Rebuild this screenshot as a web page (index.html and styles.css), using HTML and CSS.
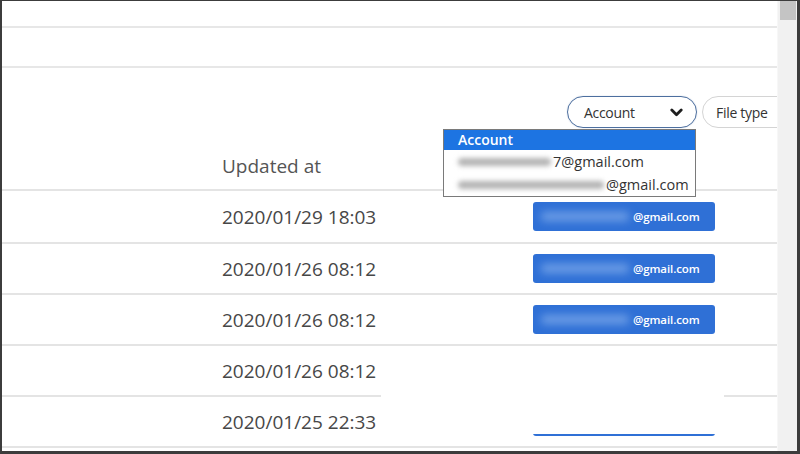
FILE: index.html
```html
<!DOCTYPE html>
<html>
<head>
<meta charset="utf-8">
<link rel="stylesheet" href="styles.css">
</head>
<body>
<div class="frame">
  <div class="main">
    <div class="band band-top"></div>
    <div class="band band-second"></div>
    <div class="toolbar">
      <div class="filters">
        <div class="pill pill-active">
          <span class="pill-label">Account</span>
          <svg class="chev" width="13" height="9" viewBox="0 0 13 9"><path d="M1.8 2 L6.5 6.7 L11.2 2" fill="none" stroke="#1e1e1e" stroke-width="2.8" stroke-linecap="round" stroke-linejoin="round"/></svg>
        </div>
        <div class="pill pill-plain"><span class="pill-label">File type</span></div>
      </div>
      <div class="header-row">
        <span class="header-cell">Updated at</span>
      </div>
    </div>
    <div class="row row-first">
      <span class="spacer"></span>
      <span class="date">2020/01/29 18:03</span>
      <span class="gap-cell"></span>
      <span class="chip"><span class="blur-blue"></span><span class="chip-mail">@gmail.com</span></span>
    </div>
    <div class="row">
      <span class="spacer"></span>
      <span class="date">2020/01/26 08:12</span>
      <span class="gap-cell"></span>
      <span class="chip"><span class="blur-blue"></span><span class="chip-mail">@gmail.com</span></span>
    </div>
    <div class="row">
      <span class="spacer"></span>
      <span class="date">2020/01/26 08:12</span>
      <span class="gap-cell"></span>
      <span class="chip"><span class="blur-blue"></span><span class="chip-mail">@gmail.com</span></span>
    </div>
    <div class="row">
      <span class="spacer"></span>
      <span class="date">2020/01/26 08:12</span>
      <span class="gap-cell"></span>
      <span class="chip-empty"></span>
    </div>
    <div class="row">
      <span class="spacer"></span>
      <span class="date">2020/01/25 22:33</span>
      <span class="gap-cell"></span>
      <span class="chip"><span class="blur-blue"></span><span class="chip-mail">@gmail.com</span></span>
    </div>
  </div>
  <div class="scrollbar"><div class="thumb"></div></div>

  <div class="redact"></div>

  <ul class="listbox">
    <li class="opt opt-selected">Account</li>
    <li class="opt"><span class="blur-grey blur-short"></span>7@gmail.com</li>
    <li class="opt"><span class="blur-grey blur-long"></span>@gmail.com</li>
  </ul>
</div>
</body>
</html>
```

FILE: styles.css
```css
html, body {
  margin: 0;
  padding: 0;
  background: #ffffff;
}
body {
  width: 800px;
  height: 454px;
  overflow: hidden;
  font-family: "Open Sans", "Noto Sans", sans-serif;
}
.frame {
  position: relative;
  box-sizing: border-box;
  width: 800px;
  height: 454px;
  border-style: solid;
  border-color: #3c3c3c;
  border-width: 1px 3px 3px 2px;
  display: flex;
  background: #fff;
}
.main {
  width: 775px;
  overflow: hidden;
  display: flex;
  flex-direction: column;
}
.band {
  border-bottom: 2px solid #e7e7e7;
}
.band-top { height: 25px; }
.band-second { height: 38px; }
.toolbar {
  height: 121px;
  border-bottom: 2px solid #e4e4e4;
  display: flex;
  flex-direction: column;
}
.filters {
  display: flex;
  gap: 5px;
  padding-top: 28px;
  padding-left: 565px;
  white-space: nowrap;
}
.pill {
  box-sizing: border-box;
  height: 32px;
  border-radius: 16px;
  display: flex;
  align-items: center;
  flex: none;
  font-size: 14px;
  color: #333;
}
.pill-active {
  width: 130px;
  border: 1.5px solid #4d6f9f;
  padding: 0 13px 0 16px;
  justify-content: space-between;
  box-shadow: 0 0 1px rgba(77,111,159,0.5);
}
.pill-plain {
  width: 100px;
  border: 1px solid #d4d4d4;
  padding-left: 13px;
}
.pill-label {
  letter-spacing: -0.3px;
}
.chev { display: block; }
.header-row {
  flex: 1;
  display: flex;
  align-items: flex-end;
  padding-left: 220px;
  padding-bottom: 10px;
}
.header-cell {
  font-size: 19px;
  line-height: 26px;
  color: #555;
}
.row {
  height: 49px;
  border-bottom: 2px solid #e4e4e4;
  display: grid;
  grid-template-columns: 220px 160px 151px 182px;
  align-items: center;
  flex: none;
}
.row-first { height: 51px; }
.date {
  font-size: 19px;
  color: #474747;
  white-space: nowrap;
}
.chip {
  height: 29px;
  border-radius: 3px;
  background: #2f70d6;
  display: flex;
  align-items: center;
  overflow: hidden;
  position: relative;
}
.chip-empty { height: 29px; }
.blur-blue {
  width: 88px;
  height: 9px;
  margin-left: 8px;
  margin-right: 4px;
  border-radius: 4px;
  background: #6f9fe6;
  filter: blur(4px);
  flex: none;
}
.chip-mail {
  font-size: 11.5px;
  font-weight: 600;
  color: #fff;
  letter-spacing: -0.1px;
}
.scrollbar {
  width: 20px;
  background: #f1f1f1;
  border-left: 1px solid #f7f7f7;
  padding-left: 2px;
  box-sizing: border-box;
}
.thumb {
  width: 16px;
  height: 19px;
  background: #c4c4c4;
}
.redact {
  position: absolute;
  left: 379px;
  top: 392px;
  width: 343px;
  height: 41px;
  background: #fff;
}
.listbox {
  position: absolute;
  left: 441px;
  top: 128px;
  width: 253px;
  box-sizing: border-box;
  margin: 0;
  padding: 0;
  list-style: none;
  border: 1px solid #7a7a7a;
  background: #fff;
  font-size: 14.5px;
  color: #333;
}
.opt {
  height: 23px;
  line-height: 23px;
  padding-left: 14px;
  white-space: nowrap;
  overflow: hidden;
  display: flex;
  align-items: center;
}
.opt-selected {
  height: 20px;
  line-height: 20px;
  background: #1d74e2;
  color: #fff;
  font-weight: 600;
  font-size: 14px;
}
.blur-grey {
  display: block;
  flex: none;
  height: 8px;
  margin-right: 2px;
  border-radius: 4px;
  background: #b4b4b4;
  filter: blur(2.5px);
}
.blur-short { width: 93px; }
.blur-long { width: 146px; }
```
